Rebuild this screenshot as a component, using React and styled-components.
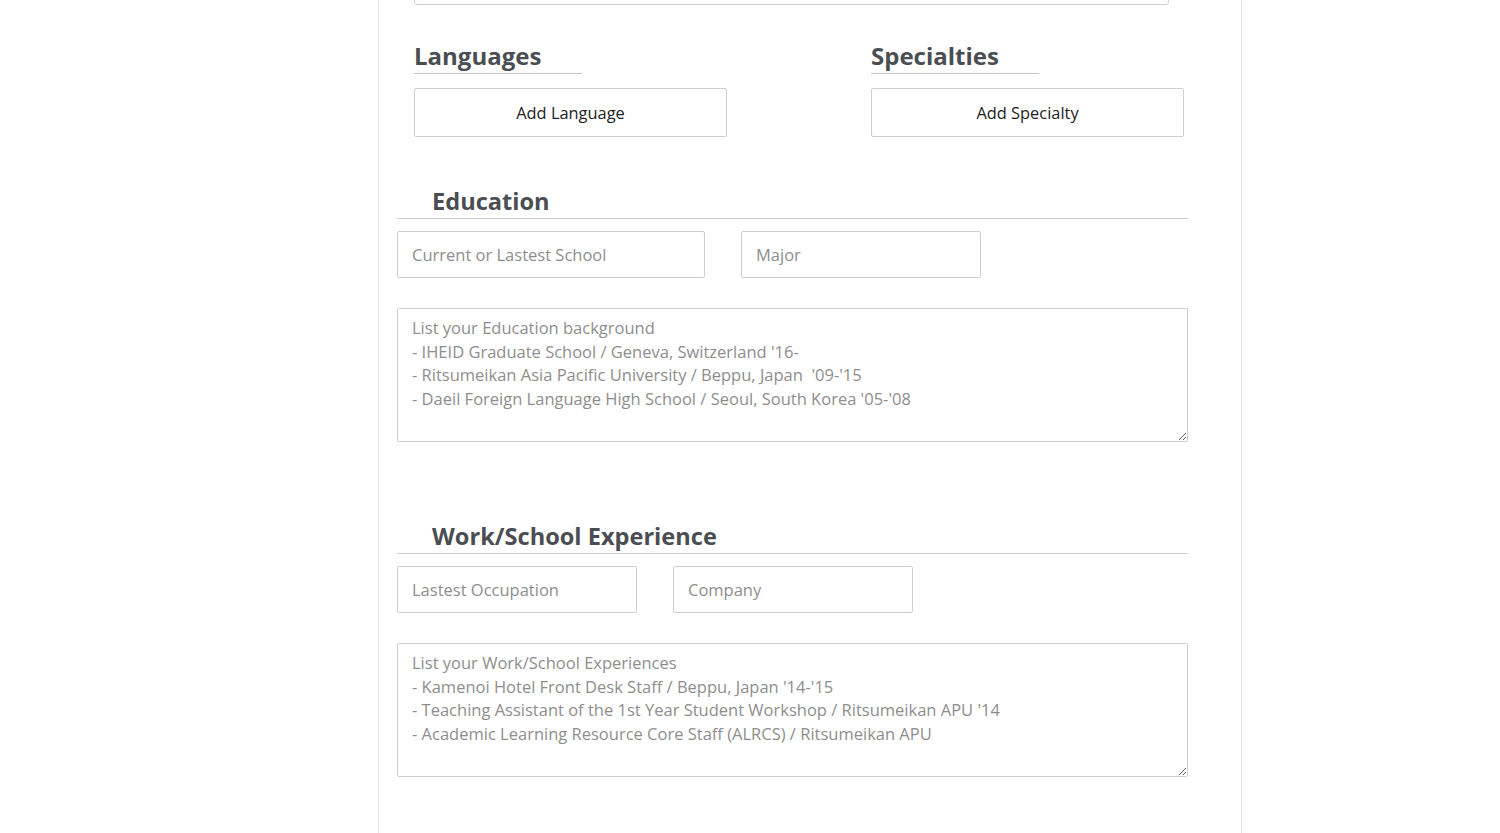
import React from 'react'
import styled, { createGlobalStyle } from 'styled-components'

const GlobalStyle = createGlobalStyle`
  html, body {
    margin: 0;
    padding: 0;
    background: #fff;
    font-family: "Open Sans", "Noto Sans", sans-serif;
    overflow: hidden;
  }
  * {
    box-sizing: border-box;
  }
`

const Page = styled.main`
  padding-left: 378px;
  height: 833px;
  overflow: hidden;
`

const Panel = styled.section`
  width: 864px;
  min-height: 900px;
  margin-top: -41px;
  padding: 0 53px 0 18px;
  border-left: 1px solid #e3e3e3;
  border-right: 1px solid #e3e3e3;
`

const TopField = styled.input`
  display: block;
  width: calc(100% - 36px);
  height: 46px;
  margin: 0 19px 0 17px;
  border: 1px solid #cfcfcf;
  border-radius: 3px;
`

const TwoCols = styled.div`
  display: grid;
  grid-template-columns: 313px 313px;
  column-gap: 144px;
  padding-left: 17px;
  margin-top: 35px;
`

const SmallHeading = styled.h3`
  width: 168px;
  margin: 0;
  padding-bottom: 1px;
  font-size: 24px;
  line-height: 32px;
  font-weight: 700;
  color: #4a4e53;
  border-bottom: 1px solid #c4c4c4;
`

const AddButton = styled.button`
  display: block;
  width: 100%;
  height: 49px;
  margin-top: 14px;
  background: #fff;
  border: 1px solid #cfcfcf;
  border-radius: 2px;
  font-family: inherit;
  font-size: 16.4px;
  color: #222;
`

const Section = styled.div`
  margin-top: ${p => p.$top}px;
`

const SectionHeading = styled.h2`
  margin: 0;
  padding: 0 0 1px 35px;
  font-size: 23.6px;
  line-height: 32px;
  font-weight: 700;
  color: #4a4e53;
  border-bottom: 1px solid #cfcfcf;
`

const FieldRow = styled.div`
  display: flex;
  gap: 36px;
  margin-top: 12px;
`

const TextInput = styled.input`
  width: ${p => p.$w}px;
  height: 47px;
  padding: 0 14px;
  border: 1px solid #cfcfcf;
  border-radius: 2px;
  font-family: inherit;
  font-size: 16.5px;
  color: #444;
  &::placeholder {
    color: #8e8e8e;
  }
`

const TextArea = styled.textarea`
  display: block;
  width: 100%;
  height: 134px;
  margin-top: 30px;
  padding: 7px 14px;
  border: 1px solid #cfcfcf;
  border-radius: 2px;
  font-family: inherit;
  font-size: 16.5px;
  line-height: 23.7px;
  color: #444;
  resize: vertical;
  &::placeholder {
    color: #8e8e8e;
  }
`

const eduText = `List your Education background
- IHEID Graduate School / Geneva, Switzerland '16-
- Ritsumeikan Asia Pacific University / Beppu, Japan  '09-'15
- Daeil Foreign Language High School / Seoul, South Korea '05-'08`

const workText = `List your Work/School Experiences
- Kamenoi Hotel Front Desk Staff / Beppu, Japan '14-'15
- Teaching Assistant of the 1st Year Student Workshop / Ritsumeikan APU '14
- Academic Learning Resource Core Staff (ALRCS) / Ritsumeikan APU`

export default function App() {
  return (
    <Page>
      <GlobalStyle />
      <Panel>
        <TopField type="text" />
        <TwoCols>
          <div>
            <SmallHeading>Languages</SmallHeading>
            <AddButton type="button">Add Language</AddButton>
          </div>
          <div>
            <SmallHeading>Specialties</SmallHeading>
            <AddButton type="button">Add Specialty</AddButton>
          </div>
        </TwoCols>

        <Section $top={48}>
          <SectionHeading>Education</SectionHeading>
          <FieldRow>
            <TextInput $w={308} placeholder="Current or Lastest School" />
            <TextInput $w={240} placeholder="Major" />
          </FieldRow>
          <TextArea placeholder={eduText} />
        </Section>

        <Section $top={78}>
          <SectionHeading>Work/School Experience</SectionHeading>
          <FieldRow>
            <TextInput $w={240} placeholder="Lastest Occupation" />
            <TextInput $w={240} placeholder="Company" />
          </FieldRow>
          <TextArea placeholder={workText} />
        </Section>
      </Panel>
    </Page>
  )
}
